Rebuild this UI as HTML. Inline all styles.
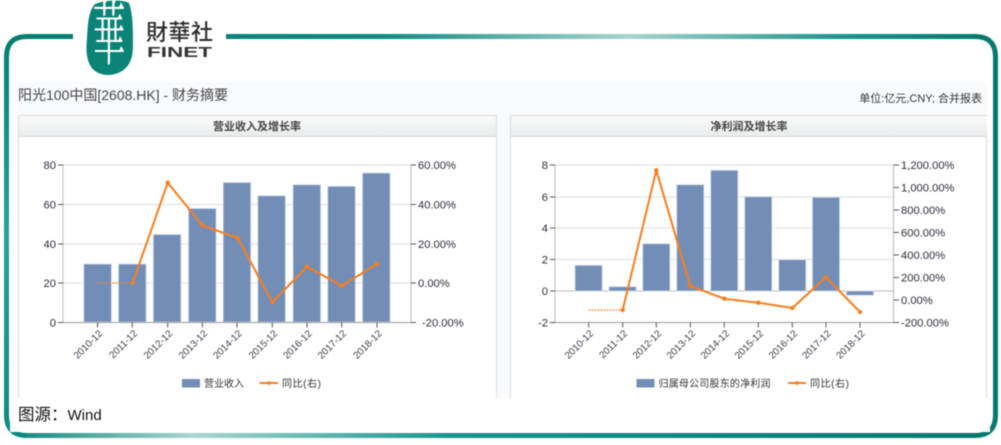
<!DOCTYPE html>
<html><head><meta charset="utf-8">
<style>
html,body{margin:0;padding:0;background:#fff;width:1001px;height:445px;overflow:hidden}
svg{display:block;filter:blur(0.45px)}
text{font-family:"Liberation Sans","Noto Sans CJK SC",sans-serif}
.a{font-size:11.2px;fill:#2e2a3a}
.x{font-size:9.800px;fill:#3a3a4a}
.g{stroke:#e2e2e2;stroke-width:1.2;fill:none}
.ax{stroke:#bbb;stroke-width:1;fill:none}
.t{stroke:#555;stroke-width:1;fill:none}
.l{stroke:#f97d1c;stroke-width:2;fill:none;stroke-linejoin:round}
.d{stroke:#f97d1c;stroke-width:1.6;fill:none;stroke-dasharray:1.6 1.4;opacity:.85}
.b{fill:#738eb6;stroke:#d5dcea;stroke-width:.8}
</style></head><body>
<svg width="1001" height="445" viewBox="0 0 1001 445" xmlns="http://www.w3.org/2000/svg">
<defs>
<linearGradient id="top" x1="226" x2="998" y1="0" y2="0" gradientUnits="userSpaceOnUse">
<stop offset="0" stop-color="#0a8378"/><stop offset=".2" stop-color="#0f8a80"/><stop offset=".52" stop-color="#a9d4cf"/><stop offset=".8" stop-color="#1d9488"/><stop offset="1" stop-color="#02776d"/></linearGradient>
<linearGradient id="bot" x1="4" x2="998" y1="0" y2="0" gradientUnits="userSpaceOnUse">
<stop offset="0" stop-color="#0a8378"/><stop offset=".19" stop-color="#a9d6d0"/><stop offset=".45" stop-color="#17958b"/><stop offset="1" stop-color="#02776d"/></linearGradient>
<linearGradient id="left" x1="0" x2="0" y1="34" y2="438" gradientUnits="userSpaceOnUse">
<stop offset="0" stop-color="#067d72"/><stop offset=".5" stop-color="#2aa297"/><stop offset="1" stop-color="#0a8a80"/></linearGradient>
<linearGradient id="hd" x1="0" x2="0" y1="0" y2="1"><stop offset="0" stop-color="#fafafa"/><stop offset="1" stop-color="#e9ebec"/></linearGradient>
</defs>

<!-- frame -->
<path d="M73 36.500H27Q6.500 36.500 6.500 57V415Q6.500 435.500 27 435.500" fill="none" stroke="url(#left)" stroke-width="5"/>
<path d="M27 435.500H975Q995.500 435.500 995.500 415V57Q995.500 36.500 975 36.500H226" fill="none" stroke="#06796f" stroke-width="5"/>
<rect x="226" y="34" width="750" height="5" fill="url(#top)"/>
<rect x="27" y="433" width="948" height="5" fill="url(#bot)"/>

<!-- logo -->
<path d="M95 4C105 0 122 -1 129 3C133 14 133 30 133 45C133 58 130 68 118 73C108 77 97 75 91 67C86 58 86 50 87 38C88 24 88 12 95 4Z" fill="#0b8376"/>
<text transform="translate(109 59) scale(.82 1.75)" text-anchor="middle" style="font-family:'Noto Serif CJK SC','Noto Sans CJK TC',serif;font-size:40px;font-weight:400;fill:#fff">華</text>
<text x="146" y="40" style="font-family:'Noto Sans CJK TC',sans-serif;font-size:22px;font-weight:500;fill:#2c2c2c" textLength="67">財華社</text>
<text transform="translate(147 57) scale(1.5 1)" style="font-size:15px;font-weight:700;fill:#333">FINET</text>

<!-- content -->
<rect x="17" y="82" width="970" height="316" fill="#f9fafc"/>
<text x="18" y="100" style="font-size:14px;fill:#444">阳光100中国[2608.HK] - 财务摘要</text>
<text x="982" y="102" text-anchor="end" style="font-size:11px;fill:#333">单位:亿元,CNY; 合并报表</text>

<!-- panels -->
<rect x="18.500" y="115.500" width="478" height="290" fill="#fff" stroke="#dcdcdc"/>
<rect x="510.500" y="115.500" width="476" height="290" fill="#fff" stroke="#dcdcdc"/>
<rect x="19" y="116" width="477" height="20.500" fill="url(#hd)"/>
<rect x="511" y="116" width="476" height="20.500" fill="url(#hd)"/>
<line x1="18" x2="496" y1="136.500" y2="136.500" stroke="#d8d8d8"/>
<line x1="511" x2="987" y1="136.500" y2="136.500" stroke="#d8d8d8"/>
<text x="257" y="130" text-anchor="middle" style="font-size:11px;font-weight:700;fill:#444">营业收入及增长率</text>
<text x="749" y="130" text-anchor="middle" style="font-size:11px;font-weight:700;fill:#444">净利润及增长率</text>
<rect x="10" y="398" width="980" height="34" fill="#fff"/>
<text x="18" y="420" style="font-size:16.500px;fill:#111">图源：<tspan style="font-size:15px">Wind</tspan></text>

<!-- chart 1 -->
<g>
<path class="g" d="M63 165H411M63 204.500H411M63 244H411M63 283H411"/>
<path class="ax" d="M63 165V322.500M411 165V322.500"/>
<path d="M58 165H63M58 204.500H63M58 244H63M58 283H63M58 322.500H63M411 165H416M411 204.500H416M411 244H416M411 283H416M411 322.500H416" class="t"/>
<rect class="b" x="83.800" y="264" width="27.600" height="58"/>
<rect class="b" x="118.500" y="264" width="27.600" height="58"/>
<rect class="b" x="153.300" y="234.500" width="27.600" height="87.500"/>
<rect class="b" x="188.500" y="208.500" width="27.600" height="113.500"/>
<rect class="b" x="223.200" y="182.500" width="27.600" height="139.500"/>
<rect class="b" x="257.800" y="195.700" width="27.600" height="126.300"/>
<rect class="b" x="293" y="184.700" width="27.600" height="137.300"/>
<rect class="b" x="327.700" y="186.300" width="27.600" height="135.700"/>
<rect class="b" x="362.500" y="173" width="27.600" height="149"/>
<path d="M63 322.500H411" stroke="#999" fill="none"/>
<path class="t" d="M97.500 322.500v5M132.300 322.500v5M167.700 322.500v5M202.300 322.500v5M237 322.500v5M272.300 322.500v5M307 322.500v5M341.700 322.500v5M377 322.500v5"/>
<path class="d" d="M97.500 283H132.700"/>
<polyline class="l" points="132.700,283 167.700,182.700 202.300,225.300 237.700,238 272.300,302.300 307,266.700 342,285.700 377,264"/>
<g fill="#f97d1c"><circle cx="132.700" cy="283" r="2.200"/><circle cx="167.700" cy="182.700" r="2.200"/><circle cx="202.300" cy="225.300" r="2.200"/><circle cx="237.700" cy="238" r="2.200"/><circle cx="272.300" cy="302.300" r="2.200"/><circle cx="307" cy="266.700" r="2.200"/><circle cx="342" cy="285.700" r="2.200"/><circle cx="377" cy="264" r="2.200"/></g>
<g text-anchor="end"><text x="56" y="169" class="a">80</text><text x="56" y="208.500" class="a">60</text><text x="56" y="248" class="a">40</text><text x="56" y="287" class="a">20</text><text x="56" y="326.500" class="a">0</text></g>
<g text-anchor="start"><text x="418" y="169" class="a">60.00%</text><text x="418" y="208.500" class="a">40.00%</text><text x="418" y="248" class="a">20.00%</text><text x="418" y="287" class="a">0.00%</text><text x="422" y="326.500" class="a">-20.00%</text></g>
<g text-anchor="end">
<text class="x" transform="translate(103 334) rotate(-45)">2010-12</text>
<text class="x" transform="translate(138 334) rotate(-45)">2011-12</text>
<text class="x" transform="translate(173 334) rotate(-45)">2012-12</text>
<text class="x" transform="translate(208 334) rotate(-45)">2013-12</text>
<text class="x" transform="translate(242.500 334) rotate(-45)">2014-12</text>
<text class="x" transform="translate(278 334) rotate(-45)">2015-12</text>
<text class="x" transform="translate(312.500 334) rotate(-45)">2016-12</text>
<text class="x" transform="translate(347 334) rotate(-45)">2017-12</text>
<text class="x" transform="translate(382.500 334) rotate(-45)">2018-12</text>
</g>
<rect x="182" y="379" width="18" height="8.500" fill="#738eb6"/>
<text x="204" y="387" style="font-size:10px;fill:#333" textLength="40">营业收入</text>
<path d="M259.500 383H278" stroke="#f97d1c" stroke-width="2"/><circle cx="269" cy="383" r="1.800" fill="#f97d1c"/>
<text x="282" y="387" style="font-size:10px;fill:#333" textLength="39">同比(右)</text>
</g>

<!-- chart 2 -->
<g>
<path class="g" d="M555 165H893.500M555 197H893.500M555 228H893.500M555 259.500H893.500"/>
<path class="ax" d="M555 165V322.500M893.500 165V322.500M555 291H893.500"/>
<path class="t" d="M550 165H555M550 197H555M550 228H555M550 259.500H555M550 291H555M550 322.500H555M893.500 165H899M893.500 187.500H899M893.500 210H899M893.500 232.500H899M893.500 255H899M893.500 277.500H899M893.500 300H899M893.500 322.500H899"/>
<rect class="b" x="575" y="265.300" width="27.200" height="25.700"/>
<rect class="b" x="609" y="286.700" width="27.200" height="4.300"/>
<rect class="b" x="642.700" y="243.700" width="27.200" height="47.300"/>
<rect class="b" x="676.700" y="184.700" width="27.200" height="106.300"/>
<rect class="b" x="710.700" y="170.300" width="27.200" height="120.700"/>
<rect class="b" x="744.700" y="196.700" width="27.200" height="94.300"/>
<rect class="b" x="778.700" y="259.700" width="27.200" height="31.300"/>
<rect class="b" x="812.400" y="197.300" width="27.200" height="93.700"/>
<rect class="b" x="846.400" y="291" width="27.200" height="4.300"/>
<path d="M555 322.500H893.500" stroke="#999" fill="none"/>
<path class="t" d="M588.700 322.500v5M622.700 322.500v5M656.300 322.500v5M690.300 322.500v5M724.300 322.500v5M758.300 322.500v5M792.300 322.500v5M826 322.500v5M860 322.500v5"/>
<path class="d" d="M588.700 310H622.700"/>
<polyline class="l" points="622.700,310 656.300,170.300 690.300,286 724.300,298.700 758.300,302.700 792.300,308 826,277.300 860,312"/>
<g fill="#f97d1c"><circle cx="622.700" cy="310" r="2.200"/><circle cx="656.300" cy="170.300" r="2.200"/><circle cx="690.300" cy="286" r="2.200"/><circle cx="724.300" cy="298.700" r="2.200"/><circle cx="758.300" cy="302.700" r="2.200"/><circle cx="792.300" cy="308" r="2.200"/><circle cx="826" cy="277.300" r="2.200"/><circle cx="860" cy="312" r="2.200"/></g>
<g text-anchor="end"><text x="548" y="169" class="a">8</text><text x="548" y="201" class="a">6</text><text x="548" y="232" class="a">4</text><text x="548" y="263.500" class="a">2</text><text x="548" y="295" class="a">0</text><text x="548" y="326.500" class="a">-2</text></g>
<g><text x="901" y="169" class="a">1,200.00%</text><text x="901" y="191.500" class="a">1,000.00%</text><text x="901" y="214" class="a">800.00%</text><text x="901" y="236.500" class="a">600.00%</text><text x="901" y="259" class="a">400.00%</text><text x="901" y="281.500" class="a">200.00%</text><text x="901" y="304" class="a">0.00%</text><text x="901" y="326.500" class="a">-200.00%</text></g>
<g text-anchor="end">
<text class="x" transform="translate(594 334) rotate(-45)">2010-12</text>
<text class="x" transform="translate(628 334) rotate(-45)">2011-12</text>
<text class="x" transform="translate(662 334) rotate(-45)">2012-12</text>
<text class="x" transform="translate(696 334) rotate(-45)">2013-12</text>
<text class="x" transform="translate(730 334) rotate(-45)">2014-12</text>
<text class="x" transform="translate(764 334) rotate(-45)">2015-12</text>
<text class="x" transform="translate(798 334) rotate(-45)">2016-12</text>
<text class="x" transform="translate(831.500 334) rotate(-45)">2017-12</text>
<text class="x" transform="translate(865.500 334) rotate(-45)">2018-12</text>
</g>
<rect x="636.500" y="379" width="18" height="8.500" fill="#738eb6"/>
<text x="658.500" y="387" style="font-size:10px;fill:#333" textLength="112">归属母公司股东的净利润</text>
<path d="M788 383H806" stroke="#f97d1c" stroke-width="2"/><circle cx="797" cy="383" r="1.800" fill="#f97d1c"/>
<text x="810" y="387" style="font-size:10px;fill:#333" textLength="39">同比(右)</text>
</g>
</svg>
</body></html>
